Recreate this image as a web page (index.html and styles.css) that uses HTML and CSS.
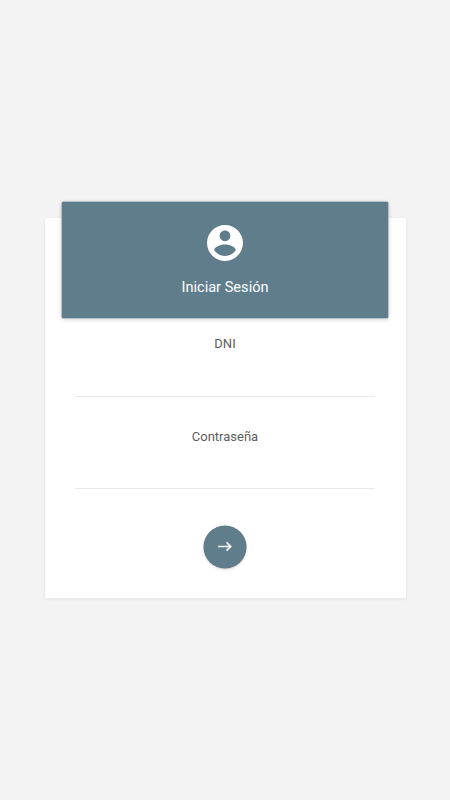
FILE: index.html
```html
<!DOCTYPE html>
<html lang="es">
<head>
<meta charset="utf-8">
<title>Iniciar Sesión</title>
<link rel="stylesheet" href="styles.css">
</head>
<body>
<main class="card">
  <header class="card-header">
    <svg class="account" viewBox="-.25 -.25 24.500 24.500" aria-hidden="true"><path d="M12 2C6.48 2 2 6.48 2 12s4.48 10 10 10 10-4.480 10-10S17.520 2 12 2zm0 3c1.660 0 3 1.340 3 3s-1.340 3-3 3-3-1.340-3-3 1.340-3 3-3zm0 14.200c-2.500 0-4.710-1.280-6-3.220.03-1.990 4-3.080 6-3.080 1.990 0 5.970 1.090 6 3.080-1.290 1.940-3.500 3.220-6 3.220z"/></svg>
    <h1>Iniciar Sesión</h1>
  </header>
  <form class="form">
    <label class="field"><span>DNI</span><input type="text"></label>
    <label class="field"><span>Contraseña</span><input type="password"></label>
    <button class="submit" type="button" aria-label="Entrar"><svg viewBox="0 0 20 20"><path d="M3.200 9.500H15.700M11.600 5.400L15.700 9.500L11.600 13.600"/></svg></button>
  </form>
</main>
</body>
</html>
```
FILE: styles.css
```css
* { box-sizing: border-box; }
body {
  margin: 0;
  height: 800px;
  padding: 218px 44px 0 45px;
  background: #f3f3f3;
  color: #5c5c5c;
  font-family: Roboto, sans-serif;
}
.card {
  display: flow-root;
  width: 361px;
  height: 380px;
  padding: 0 18px 0 17px;
  background: #fff;
  border-radius: 2px;
  box-shadow: 0 .5px 0 #f9f9f9, 0 1px 3px rgba(0, 0, 0, .11);
}
.card-header {
  height: 116px;
  margin-top: -16px;
  display: flex;
  flex-direction: column;
  align-items: center;
  padding-top: 19px;
  background: #607d8b;
  border-radius: 1px;
  box-shadow: 0 0 0 .5px #8ca1ab, 0 1px 5px rgba(0, 0, 0, .22);
  color: #fff;
}
.account { width: 44px; height: 44px; fill: #fff; }
h1 { margin: 13px 0 0; font-size: 14.600px; line-height: 19px; font-weight: 400; }
.form { display: flex; flex-direction: column; align-items: center; padding-top: 17px; }
.field { width: 300px; height: 93px; text-align: center; font-size: 13px; line-height: 18px; }
.field + .field { height: 92px; }
.field span { display: block; }
input { display: block; width: 100%; height: 44px; padding: 0; border: 0; border-bottom: 1px solid #e9e9e9; outline: 0; background: none; }
.field + .field input { height: 43px; }
.submit { width: 42px; height: 42px; margin-top: 6px; padding: 0; border: 0; border-radius: 50%; background: #607d8b; display: grid; place-items: center; box-shadow: 0 0 0 .5px #5b7582, 0 1px 3px rgba(0, 0, 0, .25); }
.submit svg { width: 20px; height: 20px; fill: none; stroke: #fff; stroke-width: 1.700; }
```
